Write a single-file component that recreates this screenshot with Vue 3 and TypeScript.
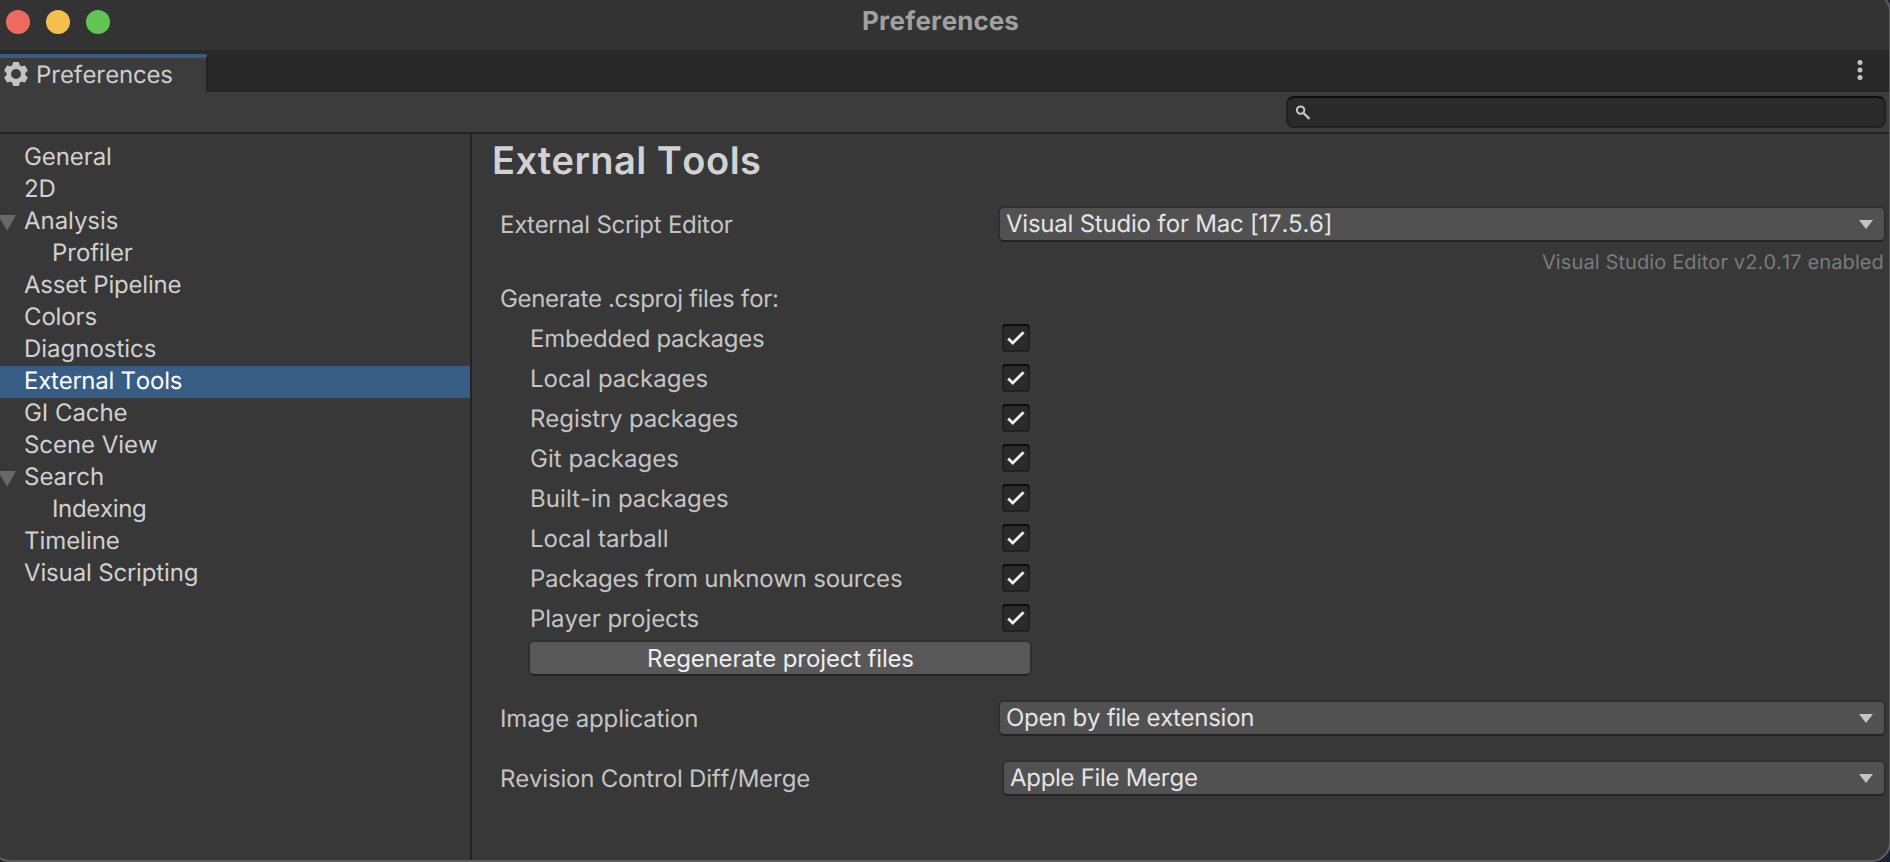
<script setup lang="ts">
import { ref } from 'vue'

interface Category {
  name: string
  tracking: number
  child?: boolean
  open?: boolean
}

interface PackageOption {
  name: string
  tracking: number
  enabled: boolean
}

const categories: Category[] = [
  { name: 'General', tracking: -0.08 },
  { name: '2D', tracking: -0.04 },
  { name: 'Analysis', tracking: -0.03, open: true },
  { name: 'Profiler', tracking: -0.2, child: true },
  { name: 'Asset Pipeline', tracking: -0.2 },
  { name: 'Colors', tracking: -0.15 },
  { name: 'Diagnostics', tracking: -0.02 },
  { name: 'External Tools', tracking: -0.23 },
  { name: 'GI Cache', tracking: -0.06 },
  { name: 'Scene View', tracking: -0.05 },
  { name: 'Search', tracking: 0.1, open: true },
  { name: 'Indexing', tracking: -0.33, child: true },
  { name: 'Timeline', tracking: -0.05 },
  { name: 'Visual Scripting', tracking: -0.14 },
]

const selected = ref('External Tools')
const query = ref('')

const packages = ref<PackageOption[]>([
  { name: 'Embedded packages', tracking: -0.27, enabled: true },
  { name: 'Local packages', tracking: 0.05, enabled: true },
  { name: 'Registry packages', tracking: -0.08, enabled: true },
  { name: 'Git packages', tracking: 0.07, enabled: true },
  { name: 'Built-in packages', tracking: 0.1, enabled: true },
  { name: 'Local tarball', tracking: 0.05, enabled: true },
  { name: 'Packages from unknown sources', tracking: -0.22, enabled: true },
  { name: 'Player projects', tracking: -0.06, enabled: true },
])

const spacing = (px: number) => ({ letterSpacing: `${px}px` })
</script>

<template>
  <div class="window">
    <header class="titlebar">
      <div class="lights">
        <span class="light close"></span>
        <span class="light minimize"></span>
        <span class="light zoom"></span>
      </div>
      <div class="title">Preferences</div>
    </header>

    <div class="tabstrip">
      <div class="tab">
        <svg class="gear" viewBox="-12 -12 24 24" width="24" height="24">
          <circle r="7.2" fill="none" stroke="#c4c4c4" stroke-width="4.4" />
          <path
            v-for="a in 6"
            :key="a"
            :transform="`rotate(${a * 60})`"
            d="M-3.9 -8 L-2.9 -12 H2.9 L3.9 -8 Z"
            fill="#c4c4c4"
          />
        </svg>
        <span class="tab-name">Preferences</span>
      </div>
      <svg class="more" viewBox="0 0 6 20" width="6" height="20">
        <circle cx="3" cy="2.5" r="2.5" fill="#c4c4c4" />
        <circle cx="3" cy="10" r="2.5" fill="#c4c4c4" />
        <circle cx="3" cy="17.5" r="2.5" fill="#c4c4c4" />
      </svg>
    </div>

    <div class="toolbar">
      <label class="search">
        <svg viewBox="0 0 16 16" width="16" height="16">
          <circle cx="4.6" cy="5.1" r="3.7" fill="none" stroke="#c8c8c8" stroke-width="2" />
          <path d="M7.2 7.7 L13.4 13.9" stroke="#c8c8c8" stroke-width="2.2" />
        </svg>
        <input v-model="query" type="text" aria-label="Search" />
      </label>
    </div>

    <div class="body">
      <nav class="sidebar">
        <div
          v-for="c in categories"
          :key="c.name"
          class="category"
          :class="{ child: c.child, active: c.name === selected }"
          :style="spacing(c.tracking)"
          @click="selected = c.name"
        >
          <svg v-if="c.open" class="foldout" viewBox="0 0 16 16" width="16" height="16">
            <path d="M-2 0 H16 L7 16 Z" fill="#686868" />
          </svg>
          <span>{{ c.name }}</span>
        </div>
      </nav>

      <main class="panel">
        <h1>External Tools</h1>

        <div class="field">
          <span class="label" :style="spacing(-0.25)">External Script Editor</span>
          <div class="dropdown">
            <span :style="spacing(-0.23)">Visual Studio for Mac [17.5.6]</span>
            <svg viewBox="0 0 14 9" width="14" height="9"><path d="M0 0 H14 L7 9 Z" fill="#c4c4c4" /></svg>
          </div>
        </div>
        <div class="hint">Visual Studio Editor v2.0.17 enabled</div>

        <div class="group" :style="spacing(-0.36)">Generate .csproj files for:</div>
        <label v-for="p in packages" :key="p.name" class="option">
          <span class="option-name" :style="spacing(p.tracking)">{{ p.name }}</span>
          <input v-model="p.enabled" type="checkbox" />
          <span class="box">
            <svg v-if="p.enabled" viewBox="0 0 28 28" width="28" height="28">
              <path d="M6.2 14.6 L10.7 19.1 L21.6 8.2" fill="none" stroke="#eeeeee" stroke-width="2.8" />
            </svg>
          </span>
        </label>
        <button class="regenerate" type="button">Regenerate project files</button>

        <div class="field image">
          <span class="label" :style="spacing(-0.12)">Image application</span>
          <div class="dropdown">
            <span :style="spacing(-0.28)">Open by file extension</span>
            <svg viewBox="0 0 14 9" width="14" height="9"><path d="M0 0 H14 L7 9 Z" fill="#c4c4c4" /></svg>
          </div>
        </div>
        <div class="field revision">
          <span class="label" :style="spacing(-0.2)">Revision Control Diff/Merge</span>
          <div class="dropdown">
            <span :style="spacing(-0.3)">Apple File Merge</span>
            <svg viewBox="0 0 14 9" width="14" height="9"><path d="M0 0 H14 L7 9 Z" fill="#c4c4c4" /></svg>
          </div>
        </div>
      </main>
    </div>
    <div class="frame"></div>
  </div>
</template>

<style>
html,
body {
  margin: 0;
  background: #383838;
}
</style>

<style scoped>
.window {
  position: relative;
  display: flex;
  flex-direction: column;
  width: 100%;
  height: 862px;
  overflow: hidden;
  box-sizing: border-box;
  background: #383838;
  color: #c4c4c4;
  font-family: Inter, 'Liberation Sans', sans-serif;
  font-size: 24px;
  font-kerning: none;
  text-rendering: geometricPrecision;
  white-space: nowrap;
}
.window * {
  box-sizing: border-box;
}
svg {
  display: block;
  flex: none;
}
.titlebar {
  flex: none;
  display: grid;
  grid-template-columns: 110px 1fr 119px;
  align-items: start;
  height: 50px;
  background: #333333;
}
.lights {
  display: flex;
  gap: 16px;
  padding: 10px 0 0 6px;
}
.light {
  width: 24px;
  height: 24px;
  border-radius: 50%;
}
.close {
  background: #ed6a5e;
}
.minimize {
  background: #f5bf4f;
}
.zoom {
  background: #61c554;
}
.title {
  text-align: center;
  font-size: 26px;
  font-weight: 700;
  line-height: 43px;
  letter-spacing: 0.04px;
  color: #a0a0a0;
}
.tabstrip {
  flex: none;
  display: flex;
  justify-content: space-between;
  height: 42px;
  padding-top: 4px;
  background: #282828;
  box-shadow: inset 0 -2px #232323;
}
.tab {
  display: flex;
  align-items: flex-start;
  width: 208px;
  height: 38px;
  padding-left: 4px;
  background: #3c3c3c;
  border-top: 4px solid #385d84;
  border-right: 2px solid #232323;
  border-radius: 0 3px 0 0;
}
.gear {
  margin-top: 4px;
}
.tab-name {
  margin-left: 8px;
  line-height: 34px;
  letter-spacing: -0.18px;
  color: #cecece;
}
.more {
  margin: 6px 27px 0 0;
}
.toolbar {
  flex: none;
  display: flex;
  justify-content: flex-end;
  height: 42px;
  padding: 4px 4px 0 0;
  background: #3c3c3c;
  border-bottom: 2px solid #232323;
}
.search {
  display: flex;
  align-items: flex-start;
  width: 600px;
  height: 32px;
  padding: 7px 8px 0 8px;
  background: #2a2a2a;
  border: 2px solid #212121;
  border-top-color: #0d0d0d;
  border-radius: 8px;
}
.search input {
  flex: 1;
  height: 16px;
  margin-left: 6px;
  padding: 0;
  border: 0;
  outline: 0;
  background: transparent;
  color: #d2d2d2;
  font: inherit;
}
.body {
  flex: 1;
  display: flex;
  min-height: 0;
}
.sidebar {
  flex: none;
  width: 472px;
  padding-top: 8px;
  border-right: 2px solid #232323;
}
.category {
  position: relative;
  height: 32px;
  padding-left: 24px;
  line-height: 30px;
  color: #d0d0d0;
}
.category.child {
  padding-left: 52px;
}
.category.active {
  background: #385d84;
  color: #ffffff;
}
.foldout {
  position: absolute;
  left: 0;
  top: 9px;
}
.panel {
  flex: 1;
  padding: 2px 4px 0 28px;
}
h1 {
  height: 70px;
  margin: 0 0 0 -8px;
  font-size: 38px;
  font-weight: 600;
  line-height: 51px;
  letter-spacing: 0.51px;
  color: #d2d2d2;
}
.field {
  display: flex;
  height: 36px;
}
.label {
  width: 498px;
  line-height: 37px;
}
.dropdown {
  flex: 1;
  display: flex;
  justify-content: space-between;
  padding: 0 11px 0 6px;
  background: #515151;
  border: 2px solid #303030;
  border-bottom-color: #242424;
  border-radius: 6px;
  line-height: 31px;
  color: #e4e4e4;
}
.dropdown svg {
  margin-top: 12px;
}
.hint {
  height: 38px;
  padding-right: 2px;
  font-size: 20px;
  line-height: 40px;
  letter-spacing: 0.12px;
  text-align: right;
  color: #7b7b7b;
}
.group {
  height: 38px;
  line-height: 37px;
}
.option {
  display: flex;
  align-items: center;
  height: 40px;
  padding-left: 30px;
}
.option input {
  position: absolute;
  opacity: 0;
  pointer-events: none;
}
.option-name {
  width: 472px;
}
.box {
  width: 28px;
  height: 28px;
  background: #2a2a2a;
  box-shadow: inset 0 2px #0d0d0d, inset 0 0 0 2px #212121;
  border-radius: 4px;
}
.regenerate {
  display: block;
  width: 504px;
  height: 36px;
  margin: 2px 0 24px 28px;
  padding: 1px 0 0 1px;
  background: #585858;
  border: 2px solid #303030;
  border-bottom-color: #242424;
  border-radius: 6px;
  font: inherit;
  line-height: 31px;
  letter-spacing: -0.17px;
  color: #eeeeee;
}
.image {
  margin-bottom: 24px;
}
.revision .label {
  width: 502px;
}
.frame {
  position: absolute;
  inset: -8px -1px 0 -10px;
  border: 2px solid #5d5d5d;
  border-radius: 20px;
  box-shadow: 0 0 0 20px #1c2233;
  pointer-events: none;
}
</style>
